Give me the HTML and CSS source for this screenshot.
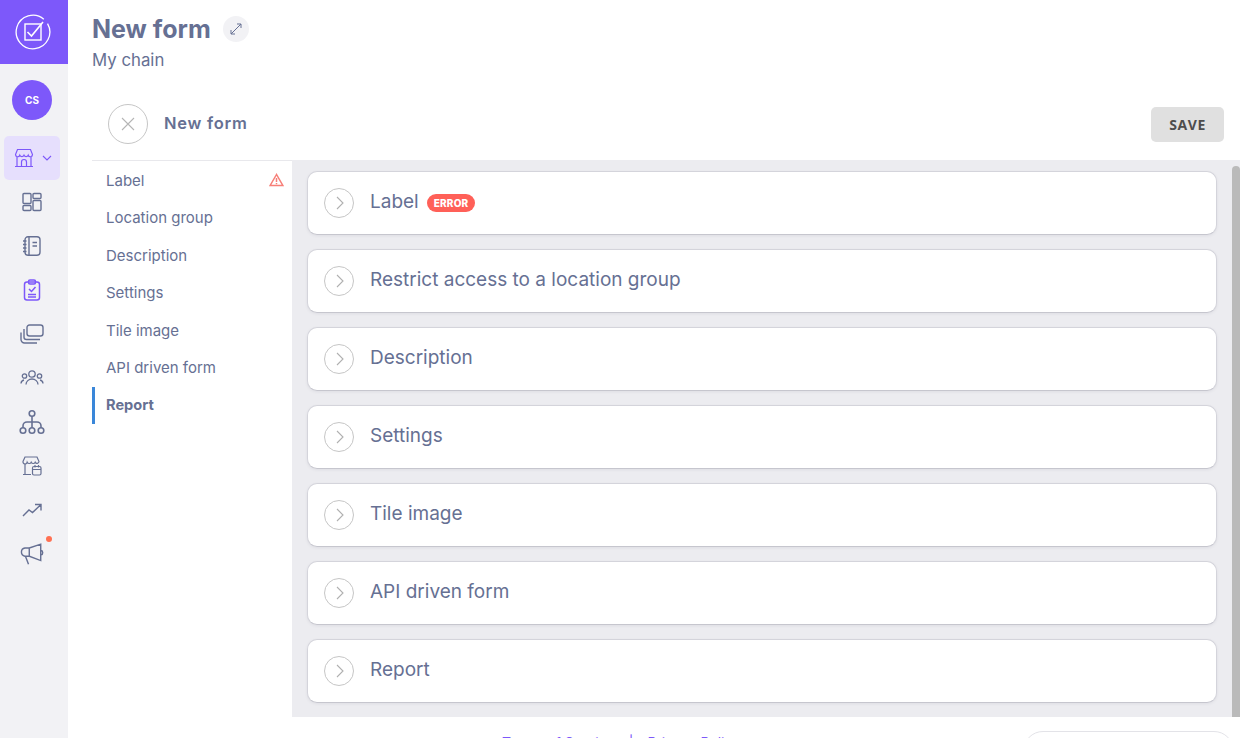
FILE: index.html
```html
<!DOCTYPE html>
<html lang="en">
<head>
<meta charset="utf-8">
<title>New form</title>
<link rel="stylesheet" href="styles.css">
</head>
<body>
<div class="app">
  <aside class="sidebar">
    <div class="logo">
      <svg width="36" height="36" viewBox="0 0 36 36" fill="none" stroke="#fff" stroke-width="1.300"><path d="M28.800 5.130A16.800 16.800 0 1 0 32.550 9.600"/><rect x="10" y="10" width="16" height="16" stroke-width="1.400"/><path d="M12.500 18l4 4L28 8" stroke-width="1.600"/></svg>
    </div>
    <div class="side-rail">
      <div class="avatar">CS</div>
      <div class="nav-active">
        <svg width="20" height="20" viewBox="0 0 20 20" fill="none" stroke="#7d58fa" stroke-width="1.200"><path d="M3.500 1.500h13l2 5a2.200 2.200 0 0 1-4.300 .7a2.300 2.300 0 0 1-4.200 0a2.300 2.300 0 0 1-4.200 0A2.200 2.200 0 0 1 1.500 6.500zM3 9v9.500M17 9v9.500M1 18.500h18M7.500 18.500v-4.500a2.500 2.500 0 0 1 5 0v4.500"/></svg>
        <svg width="10" height="6" viewBox="0 0 10 6" fill="none" stroke="#7d58fa" stroke-width="1.100"><path d="M1 1l4 4 4-4"/></svg>
      </div>
      <ul class="nav-list">
        <li><svg width="20" height="20" viewBox="0 0 20 20" fill="none" stroke="#667093" stroke-width="1.400"><rect x="1" y="1.500" width="8" height="10" rx="1"/><rect x="1" y="13.500" width="8" height="5" rx="1"/><rect x="11" y="1.500" width="8" height="5" rx="1"/><rect x="11" y="8.500" width="8" height="10" rx="1"/></svg></li>
        <li><svg width="20" height="20" viewBox="0 0 20 20" fill="none" stroke="#667093" stroke-width="1.400"><rect x="3" y="0.800" width="15" height="18.400" rx="3"/><path d="M7 1v18M1 5h3.500M1 8.500h3.500M1 12h3.500M1 15.500h3.500M10.500 6.500h4.500M10.500 10h4.500"/></svg></li>
        <li><svg width="20" height="22" viewBox="0 0 20 22" fill="none" stroke="#7d58fa" stroke-width="1.500"><rect x="2.500" y="3" width="15" height="18" rx="2.500"/><rect x="6.500" y="1" width="7" height="4" rx="1.500"/><path d="M7 10l2.500 2.500L13.500 8M6 15.500h8M6 18h8"/></svg></li>
        <li><svg width="24" height="20" viewBox="0 0 24 20" fill="none" stroke="#667093" stroke-width="1.400"><rect x="7" y="1" width="16" height="11" rx="2.500"/><path d="M4 5v8a2.500 2.500 0 0 0 2.500 2.500H20M1 8.500v7A3.500 3.500 0 0 0 4.500 19H17"/></svg></li>
        <li><svg width="24" height="18" viewBox="0 0 24 18" fill="none" stroke="#667093" stroke-width="1.300"><circle cx="12" cy="5" r="3.200"/><circle cx="4.500" cy="7" r="2.200"/><circle cx="19.500" cy="7" r="2.200"/><path d="M6 15.500a6 5.500 0 0 1 12 0M1 14.500a3.800 3.800 0 0 1 3-3.500M23 14.500a3.800 3.800 0 0 0-3-3.500"/></svg></li>
        <li><svg width="26" height="26" viewBox="0 0 26 26" fill="none" stroke="#667093" stroke-width="1.600"><circle cx="13" cy="4.500" r="2.800"/><circle cx="4" cy="21.500" r="2.800"/><circle cx="13" cy="21.500" r="2.800"/><circle cx="22" cy="21.500" r="2.800"/><path d="M13 7.300v11.400M4 18.700v-1.700a4 4 0 0 1 4-4h10a4 4 0 0 1 4 4v1.700"/></svg></li>
        <li><svg width="20" height="20" viewBox="0 0 20 20" fill="none" stroke="#667093" stroke-width="1.200"><path d="M3 1h12l2 4.500a2 2 0 0 1-3.800 .700a2.200 2.200 0 0 1-4 0a2.200 2.200 0 0 1-4 0A2 2 0 0 1 1 5.500zM3 8v10M1 18.500h8"/><rect x="10.500" y="10.500" width="8.500" height="8.500" rx="1.500"/><path d="M10.500 13.500h8.500M13 9v2.500M16.500 9v2.500"/></svg></li>
        <li><svg width="20" height="14" viewBox="0 0 20 14" fill="none" stroke="#667093" stroke-width="1.400"><path d="M1 13l6-6 3.500 2.500L18.500 2M13 1.500h6v6"/></svg></li>
        <li class="megaphone"><svg width="26" height="24" viewBox="0 0 23 22" fill="none" stroke="#667093" stroke-width="1.300"><path d="M9 5.500h-4a3.800 3.800 0 0 0 0 7.500h4zM9 5.500L19.500 2v15L9 13zM5.500 13l2.800 7.500M19.500 7.500a2.300 2.300 0 0 1 0 4.500"/></svg><span class="dot"></span></li>
      </ul>
    </div>
  </aside>

  <main class="main">
    <header class="page-head">
      <div class="title-row">
        <h1>New form</h1>
        <span class="expand"><svg width="14" height="14" viewBox="0 0 14 14" fill="none" stroke="#667093" stroke-width="1"><path d="M2 12L12 2M8 2h4v4M2 8v4h4"/></svg></span>
      </div>
      <p class="chain">My chain</p>
    </header>

    <div class="toolbar">
      <div class="toolbar-left">
        <span class="close"><svg width="14" height="14" viewBox="0 0 14 14" fill="none" stroke="#b5b5b5" stroke-width="1.100"><path d="M1 1l12 12M13 1L1 13"/></svg></span>
        <span class="form-name">New form</span>
      </div>
      <button class="save">SAVE</button>
    </div>

    <div class="editor">
      <nav class="side">
        <a class="side-item">Label<svg class="warn" width="15" height="14" viewBox="0 0 15 14" fill="none" stroke="#f77f78" stroke-width="1.500"><path d="M7.500 1.500L1.200 12.500h12.600z"/><path d="M7.500 5v4M7.500 10v1.300"/></svg></a>
        <a class="side-item">Location group</a>
        <a class="side-item">Description</a>
        <a class="side-item">Settings</a>
        <a class="side-item">Tile image</a>
        <a class="side-item">API driven form</a>
        <a class="side-item current">Report</a>
      </nav>
      <section class="panel">
        <div class="cards">
          <article class="card"><span class="chev"><svg width="8" height="14" viewBox="0 0 8 14" fill="none" stroke="#b0b0b0" stroke-width="1.100"><path d="M1 1l6 6-6 6"/></svg></span><span class="card-title">Label</span><span class="badge">ERROR</span></article>
          <article class="card"><span class="chev"><svg width="8" height="14" viewBox="0 0 8 14" fill="none" stroke="#b0b0b0" stroke-width="1.100"><path d="M1 1l6 6-6 6"/></svg></span><span class="card-title">Restrict access to a location group</span></article>
          <article class="card"><span class="chev"><svg width="8" height="14" viewBox="0 0 8 14" fill="none" stroke="#b0b0b0" stroke-width="1.100"><path d="M1 1l6 6-6 6"/></svg></span><span class="card-title">Description</span></article>
          <article class="card"><span class="chev"><svg width="8" height="14" viewBox="0 0 8 14" fill="none" stroke="#b0b0b0" stroke-width="1.100"><path d="M1 1l6 6-6 6"/></svg></span><span class="card-title">Settings</span></article>
          <article class="card"><span class="chev"><svg width="8" height="14" viewBox="0 0 8 14" fill="none" stroke="#b0b0b0" stroke-width="1.100"><path d="M1 1l6 6-6 6"/></svg></span><span class="card-title">Tile image</span></article>
          <article class="card"><span class="chev"><svg width="8" height="14" viewBox="0 0 8 14" fill="none" stroke="#b0b0b0" stroke-width="1.100"><path d="M1 1l6 6-6 6"/></svg></span><span class="card-title">API driven form</span></article>
          <article class="card"><span class="chev"><svg width="8" height="14" viewBox="0 0 8 14" fill="none" stroke="#b0b0b0" stroke-width="1.100"><path d="M1 1l6 6-6 6"/></svg></span><span class="card-title">Report</span></article>
        </div>
        <div class="scrollbar"></div>
      </section>
    </div>

    <footer class="foot">
      <span class="links"><a>Terms of Service</a><i class="sep">|</i><a>Privacy Policy</a></span>
      <span class="foot-box"></span>
    </footer>
  </main>
</div>
</body>
</html>
```
FILE: styles.css
```css
* { box-sizing: border-box; }
html, body { margin: 0; height: 100%; overflow: hidden; background: #fff; }
body { font-family: "Inter", "Open Sans", sans-serif; color: #667093; }
.app { display: flex; height: 738px; }

.sidebar { width: 68px; flex: none; background: #f2f2f5; }
.logo { height: 64px; padding-right: 2px; background: #7d58fa; display: flex; align-items: center; justify-content: center; }
.side-rail { width: 64px; display: flex; flex-direction: column; align-items: center; position: relative; }
.avatar { width: 40px; height: 40px; margin-top: 16px; border-radius: 50%; background: #7d58fa; color: #fff; font-size: 10px; font-weight: 700; display: flex; align-items: center; justify-content: center; }
.nav-active { width: 56px; height: 44px; margin-top: 16px; border-radius: 5px; background: #e6dffd; display: flex; align-items: center; justify-content: center; gap: 8px; padding-left: 2px; }
.nav-list { list-style: none; margin: 0; padding: 0; width: 100%; }
.nav-list li { height: 44px; display: flex; align-items: center; justify-content: center; position: relative; }
.megaphone .dot { position: absolute; left: 46px; top: 4px; width: 6px; height: 6px; border-radius: 50%; background: #ff7052; }

.main { flex: 1; min-width: 0; padding-left: 24px; }
.page-head { height: 88px; padding-top: 13px; }
.title-row { display: flex; align-items: center; gap: 12px; height: 32px; }
h1 { margin: 0; font-size: 25px; line-height: 32px; font-weight: 700; color: #667093; }
.expand { width: 26px; height: 26px; border-radius: 50%; background: #f2f2f5; display: flex; align-items: center; justify-content: center; }
.chain { margin: 3px 0 0; font-size: 16.800px; line-height: 24px; color: #667093; }

.toolbar { height: 73px; margin-right: 30px; padding: 0 0 0 16px; display: flex; align-items: center; justify-content: space-between; border-bottom: 1px solid #e8e8ec; }
.toolbar-left { display: flex; align-items: center; gap: 16px; }
.close { width: 40px; height: 40px; border-radius: 50%; border: 1px solid #c6c6c6; display: flex; align-items: center; justify-content: center; }
.form-name { font-size: 16.500px; line-height: 20px; margin-top: -2px; font-weight: 600; letter-spacing: .75px; color: #667093; }
.save { width: 73px; height: 35px; border: 0; border-radius: 5px; background: #e0e0e0; color: #4d4d4d; font: 700 14px "Open Sans", sans-serif; letter-spacing: .6px; padding: 0; }

.editor { display: flex; height: 557px; margin-top: -1px; margin-right: 14px; }
.side { width: 200px; flex: none; padding-top: 1.500px; }
.side-item { height: 37.500px; padding: 0 8px 0 11px; display: flex; align-items: center; justify-content: space-between; font-size: 15px; color: #667093; border-left: 3px solid transparent; }
.side-item.current { border-left-color: #3a87d9; font-weight: 700; font-size: 14.600px; }
.warn { flex: none; }

.panel { flex: 1; min-width: 0; position: relative; background: #ececf0; padding: 11px 23px 0 15px; }
.cards { display: flex; flex-direction: column; gap: 14px; }
.card { height: 64px; background: #fff; border: 1px solid #d4d4db; border-bottom-color: #c6c6ce; border-radius: 10px; display: flex; align-items: center; padding-left: 16px; box-shadow: 0 1px 3px rgba(60,60,90,.08); }
.chev { width: 30px; height: 30px; flex: none; border-radius: 50%; border: 1px solid #c6c6c6; display: flex; align-items: center; justify-content: center; margin-right: 16px; padding-left: 1px; }
.card-title { font-size: 19px; color: #667093; padding-bottom: 3px; }
.badge { margin-left: 8px; height: 18px; padding: 0 7px; border-radius: 9px; background: #ff6058; color: #fff; font-size: 10px; font-weight: 800; line-height: 18px; letter-spacing: .2px; }
.scrollbar { position: absolute; right: 0; top: 6px; bottom: 0; width: 8px; border-radius: 4px 4px 0 0; background: #bababa; }

.foot { position: relative; height: 21px; }
.links { position: absolute; left: 410px; top: 16px; font-size: 14px; line-height: 20px; color: #7d58fa; white-space: nowrap; }
.sep { font-style: normal; margin: 0 14px; }
.foot-box { position: absolute; left: 931px; top: 14px; width: 211px; height: 40px; border: 1px solid #e3e3e8; border-radius: 20px; background: #fff; }
```
